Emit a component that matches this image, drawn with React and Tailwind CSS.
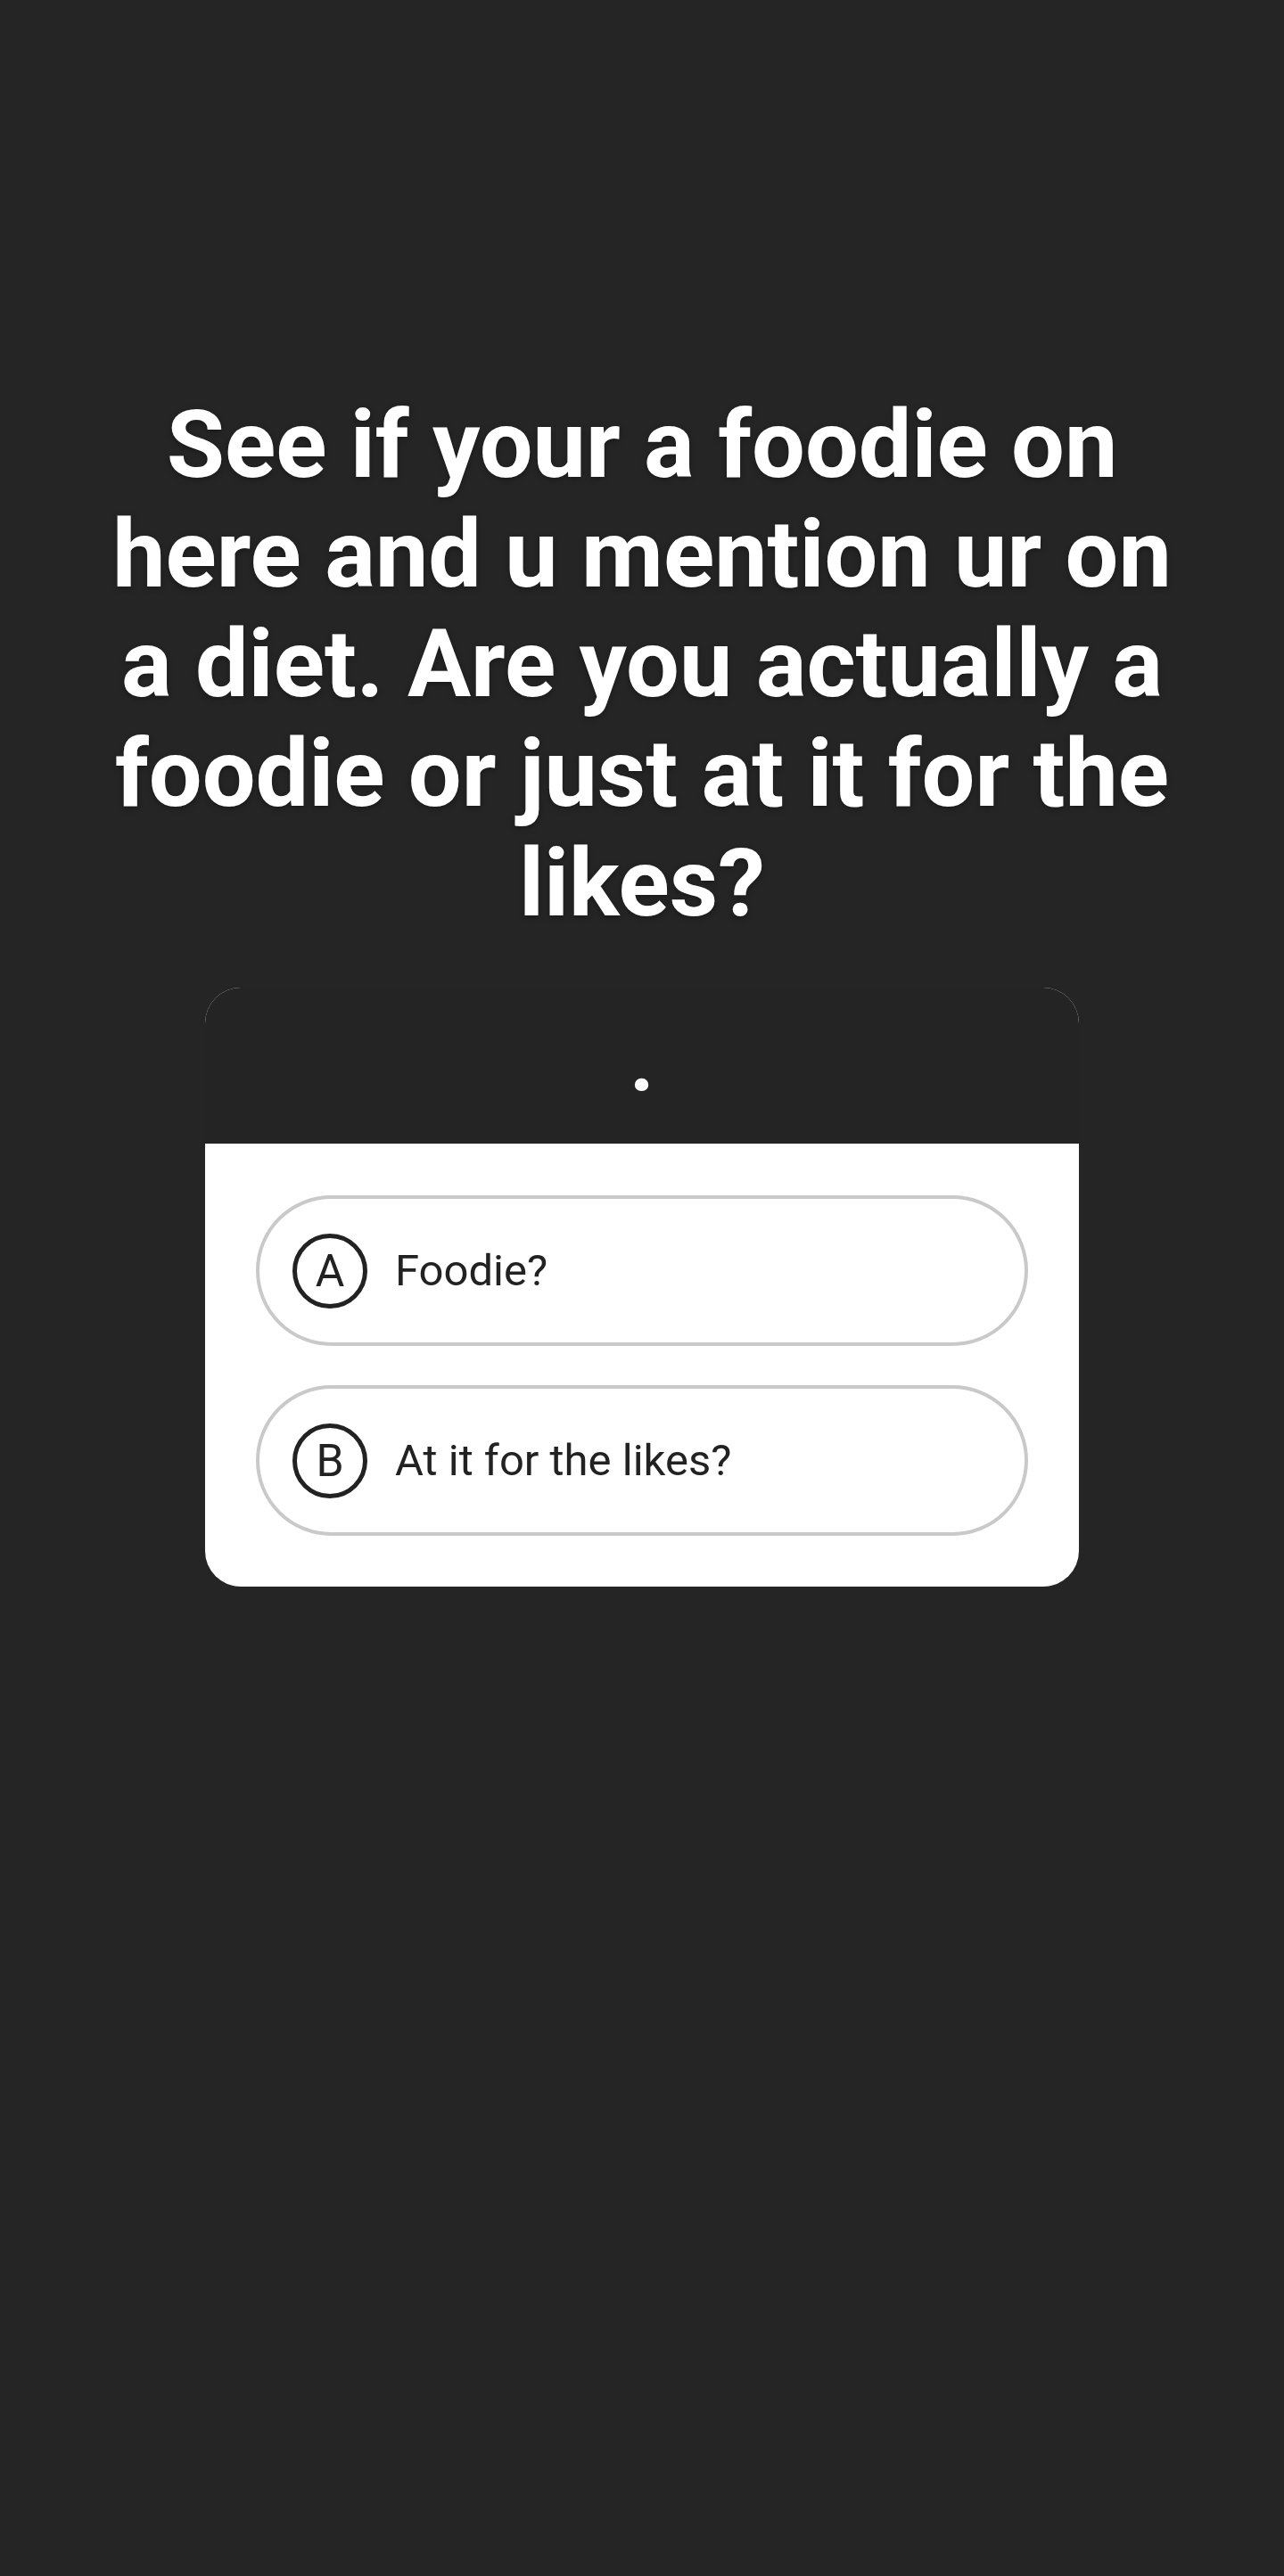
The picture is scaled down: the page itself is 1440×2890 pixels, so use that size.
export default function App() {
  const options = [
    { letter: "A", text: "Foodie?" },
    { letter: "B", text: "At it for the likes?" },
  ];
  return (
    <div className="min-h-[2890px] w-full bg-[#252525] flex flex-col items-center pt-[438px] font-['Roboto','Liberation_Sans',sans-serif]">
      <h1 className="text-white font-bold text-[106px] leading-[123px] text-center [text-shadow:0_2px_6px_rgba(0,0,0,0.35)]">
        See if your a foodie on
        <br />
        here and u mention ur on
        <br />
        a diet. Are you actually a
        <br />
        foodie or just at it for the
        <br />
        likes?
      </h1>
      <div className="mt-[55px] w-[980px] rounded-[40px] overflow-hidden bg-white">
        <div className="h-[175px] bg-[#242424] flex items-center justify-center">
          <span className="text-white font-bold text-[96px] leading-none pb-[12px]">.</span>
        </div>
        <div className="px-[57px] pt-[58px] pb-[57px] flex flex-col gap-[44px]">
          {options.map((o) => (
            <div
              key={o.letter}
              className="h-[169px] rounded-full border-[4px] border-[#c9c9c9] flex items-center pl-[37px]"
            >
              <div className="w-[84px] h-[84px] rounded-full border-[5px] border-[#222222] flex items-center justify-center shrink-0">
                <span className="text-[#222222] text-[50px] leading-none">{o.letter}</span>
              </div>
              <span className="ml-[31px] text-[#222222] text-[49px] leading-none">{o.text}</span>
            </div>
          ))}
        </div>
      </div>
    </div>
  );
}
